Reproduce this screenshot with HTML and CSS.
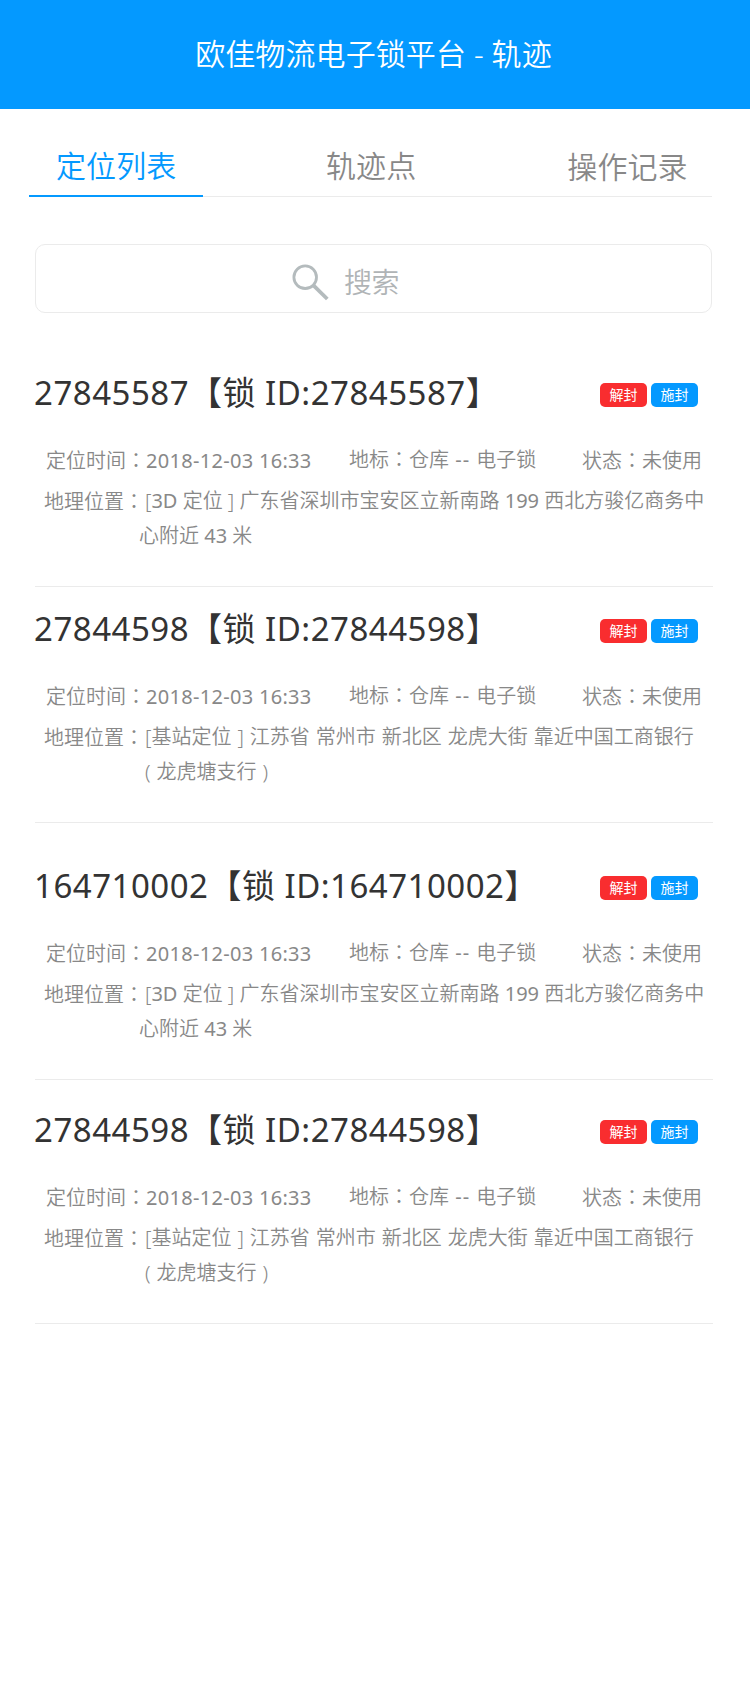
FILE: index.html
```html
<!DOCTYPE html>
<html lang="zh-CN">
<head>
    <meta charset="UTF-8">
    <title>欧佳物流电子锁平台 - 轨迹</title>
    <link rel="stylesheet" href="styles.css">
</head>
<body>

    <!-- 顶部标题 -->
    <header class="header">
        <h1>欧佳物流电子锁平台 - 轨迹</h1>
    </header>

    <!-- 选项卡 -->
    <nav class="tabs">
        <a class="tab active">定位列表</a>
        <a class="tab tab-points">轨迹点</a>
        <a class="tab tab-log">操作记录</a>
    </nav>

    <!-- 搜索框 -->
    <div class="search">
        <svg class="search-icon" width="38" height="38" viewBox="0 0 38 38">
            <circle cx="13.2" cy="13.2" r="11.3" fill="none" stroke="#b4bbbd" stroke-width="2.8"/>
            <path d="M21.2 21.2 L35.3 35" fill="none" stroke="#b4bbbd" stroke-width="3.8"/>
        </svg>
        <span>搜索</span>
    </div>

    <!-- 定位列表 -->
    <ul class="list">
        <li class="item">
            <div class="item-head">
                <h2>27845587【锁 ID:27845587】</h2>
                <div class="btns"><a class="btn red">解封</a><a class="btn blue">施封</a></div>
            </div>
            <div class="meta">
                <span class="time">定位时间<i lang="zh-Hant">：</i><b>2018-12-03 16:33</b></span>
                <span class="mark">地标<i lang="zh-Hant">：</i>仓库 <b>--</b> 电子锁</span>
                <span class="state">状态<i lang="zh-Hant">：</i>未使用</span>
            </div>
            <div class="addr">
                <span class="label">地理位置<i lang="zh-Hant">：</i></span>
                <p class="gd">[<b>3D</b> 定位 ] 广东省深圳市宝安区立新南路 <b>199</b> 西北方骏亿商务中<br><span class="outdent">心附近 <b>43</b> 米</span></p>
            </div>
        </li>
        <li class="item">
            <div class="item-head">
                <h2>27844598【锁 ID:27844598】</h2>
                <div class="btns"><a class="btn red">解封</a><a class="btn blue">施封</a></div>
            </div>
            <div class="meta">
                <span class="time">定位时间<i lang="zh-Hant">：</i><b>2018-12-03 16:33</b></span>
                <span class="mark">地标<i lang="zh-Hant">：</i>仓库 <b>--</b> 电子锁</span>
                <span class="state">状态<i lang="zh-Hant">：</i>未使用</span>
            </div>
            <div class="addr">
                <span class="label">地理位置<i lang="zh-Hant">：</i></span>
                <p class="js">[基站定位 ] 江苏省 常州市 新北区 龙虎大街 靠近中国工商银行<br>( 龙虎塘支行 )</p>
            </div>
        </li>
        <li class="item">
            <div class="item-head">
                <h2>164710002【锁 ID:164710002】</h2>
                <div class="btns"><a class="btn red">解封</a><a class="btn blue">施封</a></div>
            </div>
            <div class="meta">
                <span class="time">定位时间<i lang="zh-Hant">：</i><b>2018-12-03 16:33</b></span>
                <span class="mark">地标<i lang="zh-Hant">：</i>仓库 <b>--</b> 电子锁</span>
                <span class="state">状态<i lang="zh-Hant">：</i>未使用</span>
            </div>
            <div class="addr">
                <span class="label">地理位置<i lang="zh-Hant">：</i></span>
                <p class="gd">[<b>3D</b> 定位 ] 广东省深圳市宝安区立新南路 <b>199</b> 西北方骏亿商务中<br><span class="outdent">心附近 <b>43</b> 米</span></p>
            </div>
        </li>
        <li class="item">
            <div class="item-head">
                <h2>27844598【锁 ID:27844598】</h2>
                <div class="btns"><a class="btn red">解封</a><a class="btn blue">施封</a></div>
            </div>
            <div class="meta">
                <span class="time">定位时间<i lang="zh-Hant">：</i><b>2018-12-03 16:33</b></span>
                <span class="mark">地标<i lang="zh-Hant">：</i>仓库 <b>--</b> 电子锁</span>
                <span class="state">状态<i lang="zh-Hant">：</i>未使用</span>
            </div>
            <div class="addr">
                <span class="label">地理位置<i lang="zh-Hant">：</i></span>
                <p class="js">[基站定位 ] 江苏省 常州市 新北区 龙虎大街 靠近中国工商银行<br>( 龙虎塘支行 )</p>
            </div>
        </li>
    </ul>

</body>
</html>
```
FILE: styles.css
```css
* {
    margin: 0;
    padding: 0;
    box-sizing: border-box;
}

body {
    font-family: "Noto Sans", "Noto Sans CJK SC", sans-serif;
    font-weight: 350;
    color: #888;
    background: #fff;
    white-space: nowrap;
}

/* 顶部标题 */
.header {
    height: 109px;
    background: #0499ff;
    text-align: center;
}

.header h1 {
    font-size: 30px;
    font-weight: 350;
    line-height: 107px;
    letter-spacing: 0.1px;
    color: #fff;
    padding-right: 3px;
}

/* 选项卡 */
.tabs {
    display: flex;
    margin: 26px 38px 0 29px;
    height: 62px;
    background: linear-gradient(#ebebeb, #ebebeb) left bottom / 100% 1px no-repeat;
}

.tab {
    font-size: 30px;
    line-height: 61px;
    letter-spacing: 0.1px;
}

.tab.active {
    width: 174px;
    padding-left: 27px;
    color: #0499ff;
    border-bottom: 2px solid #0499ff;
}

.tab-points {
    margin-left: 123px;
}

.tab-log {
    margin-left: 151px;
    padding-top: 1px;
}

/* 搜索框 */
.search {
    display: flex;
    align-items: center;
    height: 69px;
    margin: 47px 38px 0 35px;
    padding-left: 256px;
    border: 1px solid #ebebeb;
    border-radius: 10px;
    font-size: 28px;
    letter-spacing: -0.5px;
    color: #b0b4b6;
}

.search-icon {
    margin: 9px 14px 0 0;
}

.search span {
    line-height: 60px;
    padding-top: 7px;
}

/* 定位列表 */
.list {
    list-style: none;
    margin: 0 37px 0 35px;
}

.item {
    padding-top: 9px;
    height: 236px;
    border-bottom: 1px solid #ebebeb;
}

.item:nth-child(1) {
    padding-top: 57px;
    height: 274px;
}

.item:nth-child(2) {
    padding-top: 19px;
}

.item:nth-child(3) {
    padding-top: 40px;
    height: 257px;
}

.item:nth-child(4) {
    padding-top: 27px;
    height: 244px;
}

.item-head {
    display: flex;
    justify-content: space-between;
    height: 44px;
}

.item-head h2 {
    margin-left: -1px;
    font-size: 33px;
    font-weight: 400;
    line-height: 45px;
    letter-spacing: 0.5px;
    color: #333;
}

.btns {
    display: flex;
    gap: 4px;
    margin: 13px 15px 0 0;
}

.btn {
    width: 47px;
    height: 24px;
    border-radius: 5px;
    font-size: 14px;
    font-weight: 400;
    line-height: 23px;
    text-align: center;
    color: #fff;
}

.red {
    background: #f92d2f;
}

.blue {
    background: #0499ff;
}

.meta,
.addr {
    display: flex;
    font-size: 20px;
    line-height: 35px;
}

.meta {
    margin: 28px 0 5px 11px;
}

.time {
    width: 303px;
}

.time b {
    letter-spacing: 0.3px;
}

.mark {
    width: 233px;
    margin-top: -1px;
    word-spacing: 1px;
}

.mark b {
    letter-spacing: 1px;
}

.meta b,
.addr b {
    font-weight: 400;
}

/* 冒号居中 */
.meta i,
.addr i {
    font-family: "Noto Sans CJK TC", sans-serif;
    font-style: normal;
}

.addr .label {
    padding-left: 9px;
    width: 110px;
}

.js {
    word-spacing: 0.8px;
}

.outdent {
    margin-left: -6px;
}
```
